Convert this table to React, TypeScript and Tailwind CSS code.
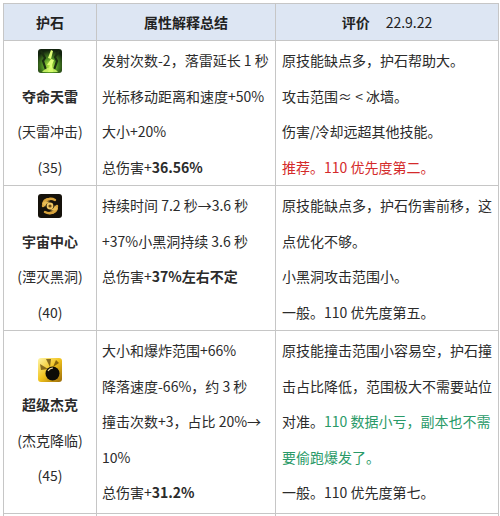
import React from "react";

const FONT = { fontFamily: '"Noto Sans CJK SC", "Noto Sans", sans-serif' };

const ThunderIcon = () => (
	<svg width="24" height="24" viewBox="0 0 24 24">
		<defs>
			<radialGradient id="tg" cx="0.5" cy="0.7" r="0.65">
				<stop offset="0" stopColor="#c4f54a" />
				<stop offset="0.5" stopColor="#4c8c22" />
				<stop offset="1" stopColor="#13240e" />
			</radialGradient>
		</defs>
		<rect width="24" height="24" rx="3" fill="url(#tg)" />
		<path d="M3 2 L7 9 L5 12 L8 21" stroke="#1a2e10" strokeWidth="2.2" fill="none" />
		<path d="M21 2 L17 8 L19 12 L16 21" stroke="#1a2e10" strokeWidth="2.2" fill="none" />
		<path d="M13 1 L10 9 L13 10 L9 16 L12 16 L10 23 L15 23 L14 16 L16 11 L13 10 L15 2 Z" fill="#e0ff78" />
		<path d="M4 23 Q12 14 20 23 Z" fill="#d2fa6a" opacity="0.85" />
	</svg>
);

const CosmoIcon = () => (
	<svg width="24" height="24" viewBox="0 0 24 24">
		<rect width="24" height="24" rx="3" fill="#15110a" />
		<g fill="none" stroke="#d9a43c" strokeWidth="2.4" strokeLinecap="round">
			<path d="M12 5 Q5 5 5 12" />
			<path d="M19 12 Q19 19 12 19" />
			<path d="M17 6 Q12 3 7 7" />
			<path d="M7 18 Q12 21 17 17" />
		</g>
		<g fill="#e9bd55">
			<path d="M4 9 Q8 6 12 8 Q8 9 7 13 Z" />
			<path d="M20 15 Q16 18 12 16 Q16 15 17 11 Z" />
		</g>
		<circle cx="12" cy="12" r="3.4" fill="#f0c865" />
		<circle cx="12" cy="12" r="1.6" fill="#6b4a14" />
	</svg>
);

const JackIcon = () => (
	<svg width="24" height="24" viewBox="0 0 24 24">
		<defs>
			<linearGradient id="jg" x1="0" y1="0" x2="1" y2="1">
				<stop offset="0" stopColor="#fff5a8" />
				<stop offset="0.5" stopColor="#f0c21c" />
				<stop offset="1" stopColor="#9a6a08" />
			</linearGradient>
		</defs>
		<rect width="24" height="24" rx="3" fill="url(#jg)" />
		<g fill="#5a3d05" opacity="0.7">
			<path d="M2 6 L10 11 L3 12 Z" />
			<path d="M8 1 L12 9 L13 1 Z" />
			<path d="M18 2 L15 9 L21 5 Z" />
		</g>
		<circle cx="14.5" cy="15.5" r="7" fill="#0d0b06" />
		<path d="M10 13 Q12 10 15 10" stroke="#e8d8a0" strokeWidth="1.2" fill="none" />
	</svg>
);

const Line = ({ children, className = "" }: { children: React.ReactNode; className?: string }) => (
	<div className={`whitespace-nowrap leading-[35.5px] ${className}`}>{children}</div>
);

const cell = "border border-[#c6c6c6] align-top px-[5px] pt-[2px] text-[14px] text-[#2b2b2b]";
const first = "border border-[#c6c6c6] align-middle pt-[2px] text-center text-[14px] text-[#2b2b2b]";

const IconLine = ({ children }: { children: React.ReactNode }) => (
	<div className="flex h-[35.5px] items-center justify-center">{children}</div>
);

export default function App() {
	return (
		<div className="bg-white p-[3px] h-[516px] overflow-hidden" style={FONT}>
			<table className="table-fixed border-collapse w-[495px]">
				<colgroup>
					<col className="w-[93px]" />
					<col className="w-[179px]" />
					<col className="w-[223px]" />
				</colgroup>
				<thead>
					<tr className="h-[37px] bg-[#dde6f3] text-[14px] text-[#222]">
						<th className="border border-[#c6c6c6] font-bold">护石</th>
						<th className="border border-[#c6c6c6] font-bold">属性解释总结</th>
						<th className="border border-[#c6c6c6]">
							<span className="font-bold">评价</span>
							<span className="font-normal ml-4">22.9.22</span>
						</th>
					</tr>
				</thead>
				<tbody>
					<tr>
						<td className={first}>
							<IconLine>
								<ThunderIcon />
							</IconLine>
							<Line className="font-bold">夺命天雷</Line>
							<Line>(天雷冲击)</Line>
							<Line>(35)</Line>
						</td>
						<td className={cell}>
							<Line>发射次数-2，落雷延长 1 秒</Line>
							<Line>光标移动距离和速度+50%</Line>
							<Line>大小+20%</Line>
							<Line>
								总伤害+<span className="font-bold">36.56%</span>
							</Line>
						</td>
						<td className={`${cell} pl-[6px]`}>
							<Line>原技能缺点多，护石帮助大。</Line>
							<Line>攻击范围≈ &lt; 冰墙。</Line>
							<Line>伤害/冷却远超其他技能。</Line>
							<Line className="text-[#d42a2a]">推荐。110 优先度第二。</Line>
						</td>
					</tr>
					<tr>
						<td className={first}>
							<IconLine>
								<CosmoIcon />
							</IconLine>
							<Line className="font-bold">宇宙中心</Line>
							<Line>(湮灭黑洞)</Line>
							<Line>(40)</Line>
						</td>
						<td className={cell}>
							<Line>持续时间 7.2 秒→3.6 秒</Line>
							<Line>+37%小黑洞持续 3.6 秒</Line>
							<Line>
								总伤害+<span className="font-bold">37%左右不定</span>
							</Line>
						</td>
						<td className={`${cell} pl-[6px]`}>
							<Line>原技能缺点多，护石伤害前移，这</Line>
							<Line>点优化不够。</Line>
							<Line>小黑洞攻击范围小。</Line>
							<Line>一般。110 优先度第五。</Line>
						</td>
					</tr>
					<tr>
						<td className={first}>
							<IconLine>
								<JackIcon />
							</IconLine>
							<Line className="font-bold">超级杰克</Line>
							<Line>(杰克降临)</Line>
							<Line>(45)</Line>
						</td>
						<td className={`${cell} pb-[2px]`}>
							<Line>大小和爆炸范围+66%</Line>
							<Line>降落速度-66%，约 3 秒</Line>
							<Line>撞击次数+3，占比 20%→</Line>
							<Line>10%</Line>
							<Line>
								总伤害+<span className="font-bold">31.2%</span>
							</Line>
						</td>
						<td className={`${cell} pl-[6px] pb-[2px]`}>
							<Line>原技能撞击范围小容易空，护石撞</Line>
							<Line>击占比降低，范围极大不需要站位</Line>
							<Line>
								对准。<span className="text-[#2a9a68]">110 数据小亏，副本也不需</span>
							</Line>
							<Line className="text-[#2a9a68]">要偷跑爆发了。</Line>
							<Line>一般。110 优先度第七。</Line>
						</td>
					</tr>
					<tr className="h-[40px]">
						<td className="border border-[#c6c6c6]" />
						<td className="border border-[#c6c6c6]" />
						<td className="border border-[#c6c6c6]" />
					</tr>
				</tbody>
			</table>
		</div>
	);
}
